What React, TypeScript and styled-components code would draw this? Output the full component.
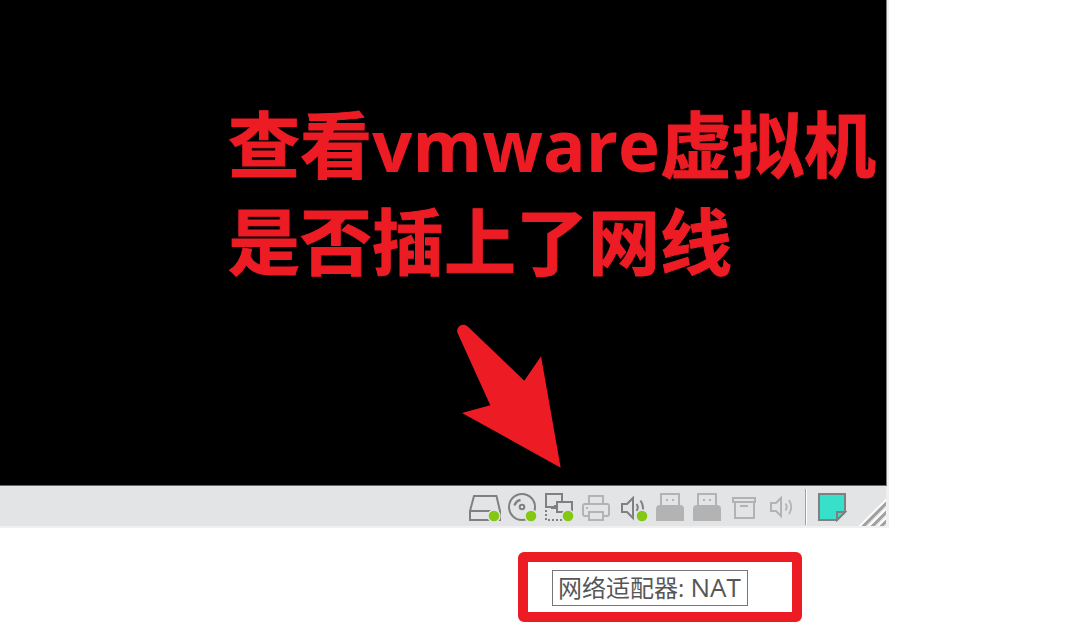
import React from "react";
import styled, { createGlobalStyle } from "styled-components";

const RED = "#ed1c24";
const DARK = "#808080";
const LIGHT = "#b3b3b3";
const BAR = "#e3e4e6";

const GlobalStyle = createGlobalStyle`
  * { box-sizing: border-box; }
  body {
    margin: 0;
    background: #ffffff;
    font-family: "Open Sans", "Noto Sans CJK SC", sans-serif;
  }
`;

const Page = styled.main`
  padding-right: 188px;
  overflow: hidden;
`;

const VmWindow = styled.section`
  border-right: 2px solid #f0f0f0;
  border-bottom: 2px solid #f0f0f0;
`;

const Screen = styled.div`
  display: flex;
  flex-direction: column;
  align-items: flex-end;
  padding: 96px 10px 17px;
  background: #000000;
  border-right: 1px solid #808080;
  border-bottom: 1px solid #6e686c;
`;

const Headline = styled.h1`
  margin: 0;
  color: ${RED};
  font-size: 72px;
  line-height: 97px;
  font-weight: 700;
  white-space: nowrap;
  -webkit-text-stroke: 1px ${RED};
`;

const Product = styled.span`
  font-size: 71px;
  -webkit-text-stroke: 0;
`;

const Arrow = styled.svg`
  display: block;
  width: 106px;
  height: 144px;
  margin: 34px 314px 0 0;
`;

const StatusBar = styled.footer`
  display: flex;
  justify-content: flex-end;
  align-items: center;
  height: 40px;
  background: ${BAR};
  border-right: 1px solid #f0f0f0;
`;

const Devices = styled.div`
  display: flex;
  gap: 5px;
  margin-right: 8px;
`;

const IconButton = styled.button`
  display: block;
  width: 32px;
  height: 32px;
  padding: 0;
  border: 0;
  background: none;

  svg {
    display: block;
    width: 100%;
    height: 100%;
  }
`;

const Divider = styled.span`
  align-self: stretch;
  width: 2px;
  margin: 3px 9px 1px 0;
  background: #ffffff;
  border-left: 1px solid #a0a0a0;
`;

const Grip = styled.svg`
  align-self: flex-end;
  width: 28px;
  height: 28px;
  margin-left: 10px;
`;

const TooltipFrame = styled.div`
  width: 284px;
  margin: 24px 87px 0 auto;
  padding: 8px 24px 6px;
  border: 10px solid ${RED};
  border-radius: 6px;
`;

const Tooltip = styled.div`
  width: fit-content;
  padding: 0 6px 0 5px;
  border: 1px solid #767676;
  color: #575757;
  font-size: 24px;
  line-height: 34px;
  white-space: nowrap;
`;

const Mode = styled.span`
  font-size: 26px;
  line-height: 24px;
`;

const Dot = () => (
  <circle cx="25" cy="26" r="6" fill="#84c814" stroke={BAR} strokeWidth="1.4" />
);

type IconProps = { color: string; active?: boolean; children: React.ReactNode };

const Icon = ({ color, active, children }: IconProps) => (
  <svg viewBox="0 0 32 32" fill="none" stroke={color} strokeWidth="2" aria-hidden="true">
    {children}
    {active && <Dot />}
  </svg>
);

const DiskIcon = () => (
  <Icon color={DARK} active>
    <path d="M5 6H27.500L31 21V30H1V21Z M1 21H24" />
  </Icon>
);

const DiscIcon = () => (
  <Icon color={DARK} active>
    <circle cx="16" cy="17" r="13" />
    <circle cx="16" cy="17" r="2.300" />
    <path d="M8.500 15.500A8 8 0 0 1 14.500 10" strokeWidth="2.400" />
  </Icon>
);

const NetworkIcon = () => (
  <Icon color={DARK} active>
    <path d="M12 17H3V4H19V11" />
    <path d="M14 12H29V22H14Z" />
    <path d="M8 18H13M12 15V19" />
    <path d="M3 20V30H22" strokeDasharray="2 2" />
  </Icon>
);

const PrinterIcon = () => (
  <Icon color={LIGHT}>
    <path d="M9 14V6H23V14" />
    <path d="M9 26H5Q3 26 3 24V16Q3 14 5 14H27Q29 14 29 16V24Q29 26 27 26H23" />
    <path d="M9 22H23V30H9Z" />
    <path d="M6 18H8" />
  </Icon>
);

const SoundIcon = ({ active }: { active?: boolean }) => (
  <Icon color={active ? DARK : LIGHT} active={active}>
    {active ? (
      <>
        <path d="M5 14H10L16 8V28L10 22H5Z" />
        <path d="M19.500 14Q22 17.500 19.500 21M23.500 10.500Q28 17 24.500 24" />
      </>
    ) : (
      <>
        <path d="M6 13H11L16 8V26L11 21H6Z" />
        <path d="M20.500 13.500Q23 17 20.500 20.500M24 10Q28.500 17 24 24" strokeWidth="1.800" />
      </>
    )}
  </Icon>
);

const UsbIcon = () => (
  <Icon color={LIGHT}>
    <path d="M7 16V4H25V16" />
    <path d="M2 31V19Q2 15 6 15H26Q30 15 30 19V31Z" fill={LIGHT} stroke="none" />
    <path d="M12 10H14M18 10H20" />
  </Icon>
);

const ArchiveIcon = () => (
  <Icon color={LIGHT}>
    <path d="M5 8H27V12H5Z" />
    <path d="M7 12V28H26V12M12 16H20" />
  </Icon>
);

const NoteIcon = () => (
  <Icon color={DARK}>
    <path d="M3 4H29V22L21 30H3Z" fill="#37e0c8" />
    <path d="M21 30V22H29Z" fill="#37e0c8" />
  </Icon>
);

const devices = [
  { label: "硬盘", icon: <DiskIcon /> },
  { label: "CD/DVD", icon: <DiscIcon /> },
  { label: "网络适配器", icon: <NetworkIcon /> },
  { label: "打印机", icon: <PrinterIcon /> },
  { label: "声卡", icon: <SoundIcon active /> },
  { label: "USB 设备 1", icon: <UsbIcon /> },
  { label: "USB 设备 2", icon: <UsbIcon /> },
  { label: "存储", icon: <ArchiveIcon /> },
  { label: "音频", icon: <SoundIcon /> },
];

export default function App() {
  return (
    <Page>
      <GlobalStyle />
      <VmWindow>
        <Screen>
          <Headline>
            查看<Product>vmware</Product>虚拟机
            <br />
            是否插上了网线
          </Headline>
          <Arrow viewBox="0 0 106 144" fill={RED} aria-hidden="true">
            <path d="M1.700 9.300C-1 3 7-2.500 12 2.700L68.300 56.700L85 32.300L104.700 143.700L6 89L34.300 81.300Z" />
          </Arrow>
        </Screen>
        <StatusBar>
          <Devices>
            {devices.map((d) => (
              <IconButton key={d.label} type="button" aria-label={d.label}>
                {d.icon}
              </IconButton>
            ))}
          </Devices>
          <Divider />
          <IconButton type="button" aria-label="便笺">
            <NoteIcon />
          </IconButton>
          <Grip viewBox="0 0 28 28" fill="none" aria-hidden="true">
            <path d="M0 30L30 0M9 30L30 9M18 30L30 18" stroke="#ffffff" strokeWidth="2" />
            <path d="M3 30.500L30.500 3M12 30.500L30.500 12M21 30.500L30.500 21" stroke="#a0a0a0" strokeWidth="3" />
          </Grip>
        </StatusBar>
      </VmWindow>
      <TooltipFrame>
        <Tooltip role="tooltip">
          网络适配器: <Mode>NAT</Mode>
        </Tooltip>
      </TooltipFrame>
    </Page>
  );
}
